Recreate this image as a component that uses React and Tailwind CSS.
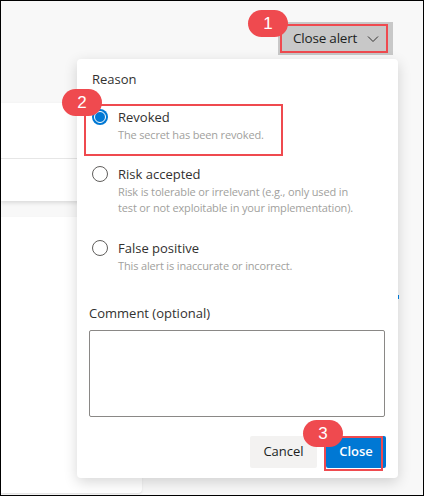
import React from 'react';

// Fond de page : cartes partiellement masquées par le panneau
function Background() {
    return (
        <div className="pt-[102px] flex flex-col gap-[16px]">
            <div className="w-[220px] h-[98px] bg-white shadow-[0_2px_4px_rgba(0,0,0,0.12)] flex flex-col">
                <div className="h-[56px] border-b border-[#e6e6e6]" />
            </div>
            <div className="w-[141px] h-[276px] bg-white rounded-br-[4px] shadow-[0_1px_2px_rgba(0,0,0,0.1)]" />
        </div>
    );
}

function Badge({ n, className }) {
    return (
        <div className={`absolute w-[40px] h-[27px] rounded-full bg-[#ef4a4f] text-white text-[17px] leading-[27px] text-center font-['Liberation_Sans',sans-serif] ${className}`}>
            {n}
        </div>
    );
}

function Radio({ checked }) {
    return checked ? (
        <div className="w-[16px] h-[16px] rounded-full bg-[#0078d4] flex items-center justify-center shrink-0">
            <div className="w-[10px] h-[10px] rounded-full bg-[#0078d4] border-[1.5px] border-white box-content" />
        </div>
    ) : (
        <div className="w-[16px] h-[16px] rounded-full border border-[#605e5c] shrink-0" />
    );
}

function Option({ checked, title, desc }) {
    return (
        <div className="flex gap-[10px] pl-[3px]">
            <div className="pt-[2px]">
                <Radio checked={checked} />
            </div>
            <div className="flex flex-col">
                <span className="text-[13px] leading-[20px] text-[#323130]">{title}</span>
                <span className="text-[11px] tracking-[-0.15px] leading-[16px] text-[#a19f9d]">{desc}</span>
            </div>
        </div>
    );
}

export default function App() {
    return (
        <div className="relative w-[424px] h-[496px] border border-black bg-[#f8f8f8] overflow-hidden font-['Open_Sans',sans-serif]">
            <Background />

            {/* Bouton Close alert */}
            <div className="absolute left-[277px] top-[21px] w-[115px] h-[33px] bg-[#c8c8c8] p-[2px]">
                <div className="w-[108px] h-full border-2 border-[#ef4a4f] flex items-center pl-[11px] gap-[10px]">
                    <span className="text-[13.5px] text-[#201f1e] tracking-[-0.2px]">Close alert</span>
                    <svg width="12" height="8" viewBox="0 0 12 8" fill="none">
                        <polyline points="1,1.5 6,6.5 11,1.5" stroke="#323130" strokeWidth="1" />
                    </svg>
                </div>
            </div>
            <Badge n="1" className="left-[247px] top-[9px]" />

            {/* Panneau de fermeture */}
            <div className="absolute left-[76px] top-[58px] w-[321px] h-[419px] bg-white rounded-[4px] shadow-[0_4px_14px_rgba(0,0,0,0.16)] px-[12px] pt-[10px] flex flex-col">
                <span className="pl-[3px] text-[13px] leading-[20px] text-[#323130]">Reason</span>
                <div className="mt-[18px] flex flex-col">
                    <Option checked title="Revoked" desc="The secret has been revoked." />
                    <div className="mt-[21px]">
                        <Option
                            title="Risk accepted"
                            desc={<>Risk is tolerable or irrelevant (e.g., only used in<br />test or not exploitable in your implementation).</>}
                        />
                    </div>
                    <div className="mt-[22px]">
                        <Option title="False positive" desc="This alert is inaccurate or incorrect." />
                    </div>
                </div>
                <span className="mt-[29px] text-[13px] leading-[20px] text-[#323130]">Comment (optional)</span>
                <div className="mt-[7px] w-[296px] h-[87px] border border-[#8a8886] rounded-[2px]" />
                <div className="mt-[19px] flex justify-end gap-[9px]">
                    <button className="w-[67px] h-[32px] bg-[#f3f2f1] rounded-[2px] text-[13px] text-[#201f1e]">Cancel</button>
                    <button className="w-[60px] h-[32px] bg-[#0078d4] rounded-[2px] text-[13px] font-semibold text-white">Close</button>
                </div>
            </div>

            {/* Annotations */}
            <div className="absolute left-[83px] top-[103px] w-[199px] h-[52px] border-2 border-[#ef4a4f]" />
            <Badge n="2" className="left-[61px] top-[88px]" />
            <div className="absolute left-[323px] top-[435px] w-[59px] h-[35px] border-2 border-[#ef4a4f]" />
            <Badge n="3" className="left-[302px] top-[419px]" />
            <div className="absolute left-[397px] top-[294px] w-[1px] h-[4px] bg-[#0078d4]" />
        </div>
    );
}
